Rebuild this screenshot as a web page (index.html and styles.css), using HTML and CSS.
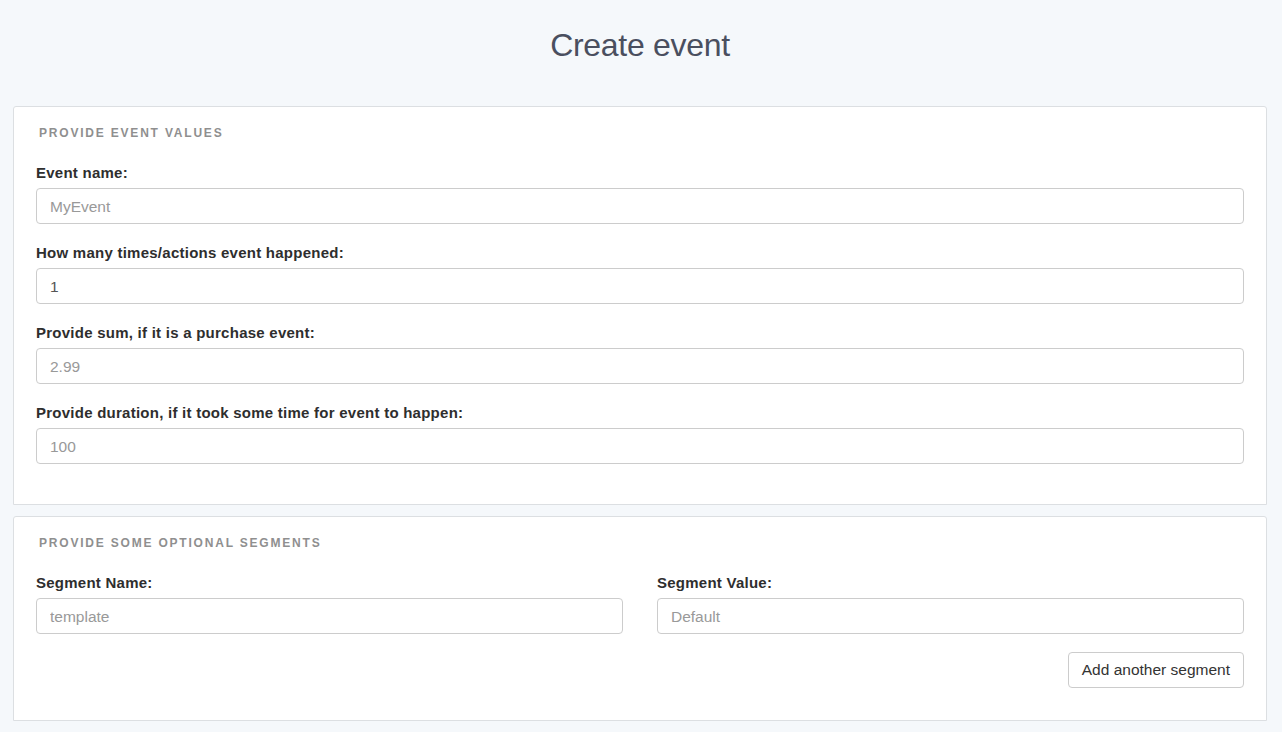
FILE: index.html
```html
<!DOCTYPE html>
<html lang="en">
<head>
<meta charset="utf-8">
<title>Create event</title>
<link rel="stylesheet" href="styles.css">
</head>
<body>
<div class="page">
  <header class="page-header">
    <h1 class="page-title">Create event</h1>
  </header>

  <section class="panel">
    <h2 class="panel-heading">Provide event values</h2>
    <div class="form-group">
      <label class="form-label" for="ev-name">Event name:</label>
      <input class="form-input" id="ev-name" type="text" placeholder="MyEvent">
    </div>
    <div class="form-group">
      <label class="form-label" for="ev-count">How many times/actions event happened:</label>
      <input class="form-input" id="ev-count" type="text" value="1">
    </div>
    <div class="form-group">
      <label class="form-label" for="ev-sum">Provide sum, if it is a purchase event:</label>
      <input class="form-input" id="ev-sum" type="text" placeholder="2.99">
    </div>
    <div class="form-group">
      <label class="form-label" for="ev-dur">Provide duration, if it took some time for event to happen:</label>
      <input class="form-input" id="ev-dur" type="text" placeholder="100">
    </div>
  </section>

  <section class="panel panel-segments">
    <h2 class="panel-heading">Provide some optional segments</h2>
    <div class="segment-row">
      <div class="form-group">
        <label class="form-label" for="seg-name">Segment Name:</label>
        <input class="form-input" id="seg-name" type="text" placeholder="template">
      </div>
      <div class="form-group">
        <label class="form-label" for="seg-val">Segment Value:</label>
        <input class="form-input" id="seg-val" type="text" placeholder="Default">
      </div>
    </div>
    <div class="actions">
      <button class="btn" type="button">Add another segment</button>
    </div>
  </section>
</div>
</body>
</html>
```

FILE: styles.css
```css
html, body {
  margin: 0;
  padding: 0;
}

body {
  background: #f5f8fb;
  font-family: "Liberation Sans", Arial, Helvetica, sans-serif;
  color: #333333;
}

.page {
  padding: 0 15px 0 13px;
}

.page-header {
  padding-top: 25px;
  margin-bottom: 41px;
  text-align: center;
}

.page-title {
  margin: 0;
  font-size: 32px;
  line-height: 40px;
  font-weight: normal;
  letter-spacing: -0.3px;
  color: #4a4f5f;
}

.panel {
  background: #ffffff;
  border: 1px solid #dcdfe2;
  border-radius: 3px 3px 0 0;
  padding: 18px 22px 21px 22px;
  margin-bottom: 11px;
}

.panel-heading {
  margin: 0 0 22px 3px;
  font-size: 12px;
  line-height: 16px;
  font-weight: bold;
  letter-spacing: 1.8px;
  text-transform: uppercase;
  color: #8f8f8f;
}

.form-group {
  margin-bottom: 19px;
}

.form-label {
  display: block;
  margin-bottom: 5px;
  font-size: 15px;
  line-height: 20px;
  font-weight: bold;
  letter-spacing: 0.25px;
  color: #2e2e2e;
}

.form-input {
  display: block;
  box-sizing: border-box;
  width: 100%;
  height: 36px;
  margin: 0;
  padding: 2px 13px 0 13px;
  border: 1px solid #cccccc;
  border-radius: 4px;
  background: #ffffff;
  font-family: "Liberation Sans", Arial, Helvetica, sans-serif;
  font-size: 15.5px;
  color: #555555;
  outline: none;
}

.form-input::placeholder {
  color: #999999;
}

.segment-row {
  display: grid;
  grid-template-columns: 1fr 1fr;
  column-gap: 34px;
}

.segment-row .form-group {
  margin-bottom: 18px;
}

.actions {
  display: flex;
  justify-content: flex-end;
  margin-bottom: 11px;
}

.btn {
  box-sizing: border-box;
  height: 36px;
  padding: 0 13px;
  border: 1px solid #cccccc;
  border-radius: 4px;
  background: #ffffff;
  font-family: "Liberation Sans", Arial, Helvetica, sans-serif;
  font-size: 15.5px;
  color: #333333;
  cursor: pointer;
}
```
